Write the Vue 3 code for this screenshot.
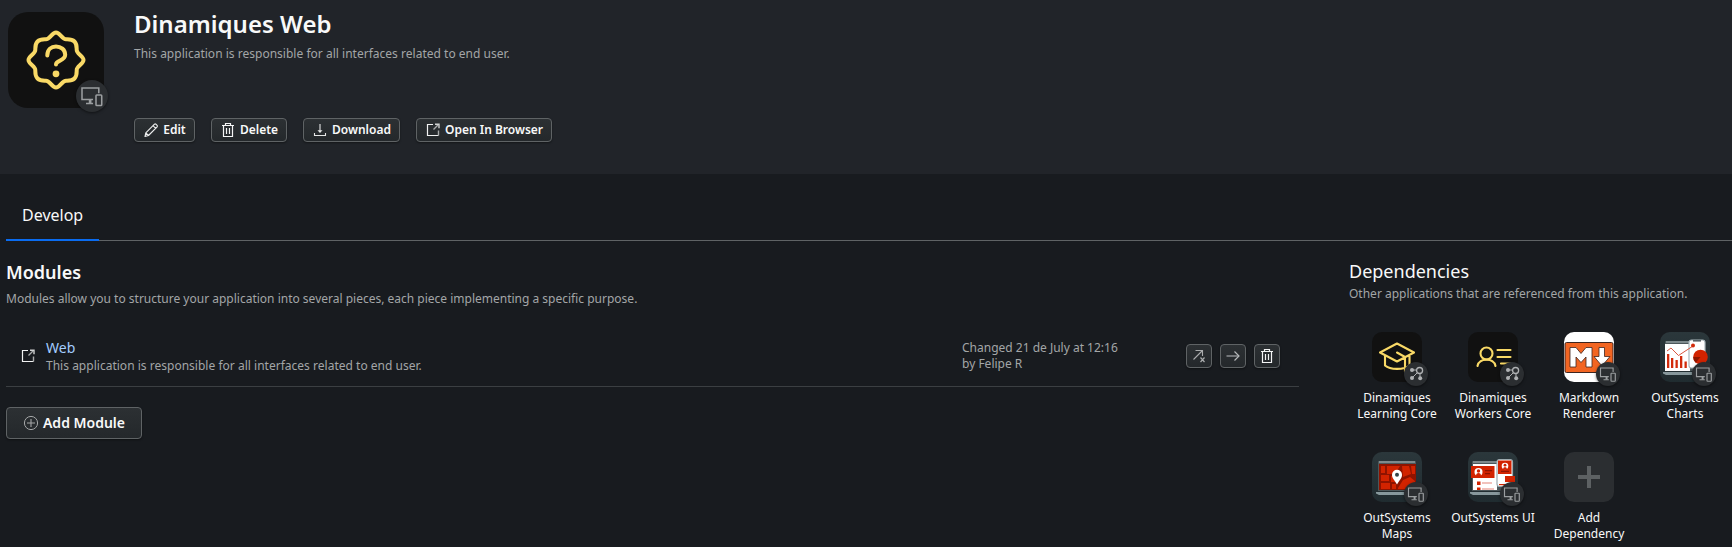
<script setup>
const actions = [
  { label: 'Edit', icon: 'edit', cls: 'w-edit' },
  { label: 'Delete', icon: 'trash', cls: 'w-delete' },
  { label: 'Download', icon: 'download', cls: 'w-download' },
  { label: 'Open In Browser', icon: 'open', cls: 'w-open' },
]
const rowActions = ['unlink', 'arrow', 'trash']
const dependencies = [
  { lines: ['Dinamiques', 'Learning Core'], icon: 'learning', tile: 'black', badge: 'service' },
  { lines: ['Dinamiques', 'Workers Core'], icon: 'workers', tile: 'black', badge: 'service' },
  { lines: ['Markdown', 'Renderer'], icon: 'markdown', tile: 'white', badge: 'devices' },
  { lines: ['OutSystems', 'Charts'], icon: 'charts', tile: 'slate', badge: 'devices' },
  { lines: ['OutSystems', 'Maps'], icon: 'maps', tile: 'slate', badge: 'devices' },
  { lines: ['OutSystems UI'], icon: 'ui', tile: 'slate', badge: 'devices' },
  { lines: ['Add', 'Dependency'], icon: 'plus', tile: 'add', badge: null },
]
</script>

<template>
  <div class="page">
    <svg class="sprite" aria-hidden="true">
      <symbol id="edit" viewBox="0 0 16 16">
        <path d="M2 14.500l.8-3.700L11.500 2.200q.7-.6 1.400 0l1.200 1.200q.6.700 0 1.400L5.500 13.500zM10 3.700l2.700 2.700M2.800 10.800l2.700 2.700" fill="none" stroke="#eceded" stroke-width="1.150" stroke-linejoin="round" />
      </symbol>
      <symbol id="trash" viewBox="0 0 16 16">
        <path d="M2 3.500h12M5.500 3.500v-2h5v2M3.500 3.500v11h9v-11M6.500 6v6M9.500 6v6" fill="none" stroke="#f4f5f5" stroke-width="1.200" />
      </symbol>
      <symbol id="download" viewBox="0 0 16 16">
        <path d="M8 2v8" fill="none" stroke="#a4a6a7" stroke-width="1.700" />
        <path d="M5.500 8.300h5L8 11z" fill="#e6e7e7" />
        <path d="M2.500 11v2.500h11V11" fill="none" stroke="#e6e7e7" stroke-width="1.100" />
      </symbol>
      <symbol id="open" viewBox="0 0 16 16">
        <path d="M8 2.500H2.500v11h11" fill="none" stroke="#f1f2f2" stroke-width="1.200" />
        <path d="M13.500 13.500V8.500M8.500 7.500l4.500-4.500" fill="none" stroke="#a9abac" stroke-width="1.400" />
        <path d="M10 2.200h4v4" fill="none" stroke="#d0d2d2" stroke-width="1.400" />
      </symbol>
      <symbol id="unlink" viewBox="0 0 16 16">
        <path d="M2.500 11.500l9-9M4.500 2.500h7V8" fill="none" stroke="#aaacad" stroke-width="1.100" />
        <path d="M9.500 9.500l4 4.500M13.500 9.500l-4 4.500" fill="none" stroke="#aaacad" stroke-width="1.200" />
      </symbol>
      <symbol id="arrow" viewBox="0 0 16 16">
        <path d="M1.500 8h12.500" fill="none" stroke="#85898b" stroke-width="1.600" />
        <path d="M9.500 3.500L14 8l-4.500 4.500" fill="none" stroke="#b7b9ba" stroke-width="1.200" />
      </symbol>
      <symbol id="devices" viewBox="0 0 24 24">
        <path d="M12.800 14.600H4.500V6h12.600v4M7.500 17.700h5.300" fill="none" stroke="#9b9ea0" stroke-width="1.150" />
        <path d="M10.600 14.600v3" fill="none" stroke="#9b9ea0" stroke-width="2" />
        <rect x="15" y="11.200" width="4.300" height="8" rx=".6" fill="none" stroke="#9b9ea0" stroke-width="1.150" />
      </symbol>
      <symbol id="service" viewBox="0 0 24 24">
        <g stroke="#b0b2b4" stroke-width="1" fill="none">
          <path d="M8 8h4.500M8 16l5-5M16 11.500V16" />
          <circle cx="15.600" cy="8.500" r="3" stroke-width="1.300" />
        </g>
        <g fill="#b0b2b4"><circle cx="8" cy="8" r="2" /><circle cx="8" cy="16" r="2" /><circle cx="16.200" cy="16.200" r="2" /></g>
      </symbol>
      <symbol id="laptop" viewBox="0 0 50 50">
        <path d="M6 9.500Q6 9 7 9h36q1 0 1 1v29H6z" fill="#4c575a" />
        <path d="M7 9h36v2H7z" fill="#7d898c" />
        <path d="M4 40h40v1.500l-2 1.500H7l-3-1.500z" fill="#87989c" />
      </symbol>
    </svg>

    <header class="header">
      <div class="app-icon">
        <svg class="app-glyph" viewBox="0 0 60 60">
          <g fill="none" stroke="#f9d966" stroke-width="4" stroke-linecap="round" stroke-linejoin="round">
            <path d="M30 2.500C34 2.500 36 9.300 40 9.300C43 9.300 46 9 48.500 11.500C51 14 50.700 17 50.700 20C50.700 24 57.500 26 57.500 30C57.500 34 50.700 36 50.700 40C50.700 43 51 46 48.500 48.500C46 51 43 50.700 40 50.700C36 50.700 34 57.500 30 57.500C26 57.500 24 50.700 20 50.700C17 50.700 14 51 11.500 48.500C9 46 9.300 43 9.300 40C9.300 36 2.500 34 2.500 30C2.500 26 9.300 24 9.300 20C9.300 17 9 14 11.500 11.500C14 9 17 9.300 20 9.300C24 9.300 26 2.500 30 2.500Z" />
            <path d="M21.300 25.500c0-6.200 4-9 8.700-9s9.200 3 9.200 8.300c0 6.500-9.200 5-9.200 9.700" />
          </g>
          <circle cx="30" cy="43.800" r="3.400" fill="#f9d966" />
        </svg>
        <span class="badge badge-lg"><svg viewBox="0 0 24 24"><use href="#devices" /></svg></span>
      </div>
      <div class="info">
        <h1>Dinamiques Web</h1>
        <p class="muted lead">This application is responsible for all interfaces related to end user.</p>
        <div class="actions">
          <button v-for="a in actions" :key="a.label" class="btn" :class="a.cls">
            <svg class="ico"><use :href="'#' + a.icon" /></svg><span>{{ a.label }}</span>
          </button>
        </div>
      </div>
    </header>

    <nav class="tabs"><div class="tab">Develop</div></nav>

    <div class="columns">
      <section class="modules">
        <h2>Modules</h2>
        <p class="muted">Modules allow you to structure your application into several pieces, each piece implementing a specific purpose.</p>
        <div class="row">
          <svg class="ico"><use href="#open" /></svg>
          <div class="mod">
            <a>Web</a>
            <p class="muted wide">This application is responsible for all interfaces related to end user.</p>
          </div>
          <div class="changed muted">Changed 21 de July at 12:16<br />by Felipe R</div>
          <div class="row-actions">
            <button v-for="i in rowActions" :key="i" class="btn square"><svg class="ico"><use :href="'#' + i" /></svg></button>
          </div>
        </div>
        <button class="btn add-module">
          <svg class="ico" viewBox="0 0 16 16"><g fill="none" stroke="#a5a7a8"><circle cx="8" cy="8" r="6.600" stroke-width="1" /><path d="M8 4v8M4 8h8" stroke-width="1.100" /></g></svg><span>Add Module</span>
        </button>
      </section>

      <aside class="deps">
        <h3>Dependencies</h3>
        <p class="muted">Other applications that are referenced from this application.</p>
        <div class="grid">
          <div v-for="d in dependencies" :key="d.icon" class="dep">
            <div class="tile" :class="d.tile">
              <svg class="art" viewBox="0 0 50 50">
                <g v-if="d.icon === 'learning'" fill="none" stroke="#f9d966" stroke-width="2.100" stroke-linejoin="round" stroke-linecap="round">
                  <path d="M8 20.500L25 11.500l17 9L25 29.500zM13 24v9.500c5 4.500 19 4.500 24.500 0V24M25 20.500l8 4.500v15" />
                </g>
                <g v-else-if="d.icon === 'workers'" fill="none" stroke="#f9d966" stroke-width="2.100" stroke-linecap="round">
                  <circle cx="18.500" cy="21.500" r="6" />
                  <path d="M9.500 34c1.500-8.500 16.500-8.500 18 0M29.500 18h13M29.500 25h13M33 31.500h9.500" />
                </g>
                <g v-else-if="d.icon === 'markdown'">
                  <rect x="1" y="10.500" width="48" height="30" rx="1.500" fill="#f26522" stroke="#3d2520" stroke-width="1" />
                  <path d="M6 35V15.500h6l5 6 5-6h6V35h-6V25l-5 5.500-5-5.500v10z" fill="#fff" stroke="#3d2520" stroke-width=".8" />
                  <path d="M35 15.500h5.500v9H46L38 34l-8-9.500h5z" fill="#fff" stroke="#3d2520" stroke-width=".8" />
                </g>
                <g v-else-if="d.icon === 'charts'">
                  <use href="#laptop" x="-1" width="50" height="50" />
                  <path d="M5 12h25v27H5z" fill="#fff" />
                  <g fill="#d22b0b"><path d="M7 22h2.300v14H7zM11 26h2.300v10H11zM15.500 28h2.300v8h-2.300zM20 24h2.300v12H20zM24.500 29.500h2.300V36h-2.300z" /></g>
                  <rect x="29" y="8" width="16" height="28" rx="2.500" fill="#fff" stroke="#aab7bc" stroke-width="1.200" />
                  <path d="M33 8h8v1.600h-8z" fill="#566166" />
                  <path d="M7 19l4-3 7.500 7.500L33 14" fill="none" stroke="#d5432a" stroke-width=".9" />
                  <circle cx="33" cy="13.500" r="2" fill="#d22b0b" />
                  <circle cx="40.500" cy="25" r="7.300" fill="#d22300" />
                  <path d="M40.500 25h-7.300q0 4 2.500 5.800z" fill="#8d1600" />
                </g>
                <g v-else-if="d.icon === 'maps'">
                  <use href="#laptop" width="50" height="50" />
                  <path d="M7 12h37v26H7z" fill="#8e1300" />
                  <path d="M9 14h4v7H9zM15 14h13l-5 8h-8zM30 14h7l2 8-8 3zM39 14h4v8h-3zM9 23h8v6H9zM19 24h4v6h-4zM9 31h9v6H9zM20 32h4v5h-4zM26 36l5-8 7-3 5 4v8H26z" fill="#d22300" />
                  <path d="M25 32.500c-3-5-5-6.500-5-9.700a5 5 0 0 1 10 0c0 3.200-2 4.700-5 9.700z" fill="#fff" /><circle cx="25" cy="22.800" r="2" fill="#34454a" />
                </g>
                <g v-else-if="d.icon === 'ui'">
                  <use href="#laptop" x="-2" width="50" height="50" />
                  <path d="M5 12h24v26H5z" fill="#fff" />
                  <path d="M3 14h23.500v12H3z" fill="#d22300" />
                  <path d="M17 18h7v1.200h-7zM17 21h5v1.200h-5z" fill="#8e1300" />
                  <path d="M9 29.500h3.500V33H9zM9 35.500h3.500V38H9z" fill="#d22300" />
                  <path d="M14 30.500h10v1H14zM14 36.500h12v1H14z" fill="#e4857a" />
                  <circle cx="10.500" cy="20" r="4" fill="#fff" /><circle cx="10.500" cy="19" r="1.700" fill="#d22300" /><path d="M8 24q0-3 2.500-3T13 24z" fill="#d22300" />
                  <rect x="29" y="7.500" width="15.500" height="27" rx="2.500" fill="#fff" stroke="#9caaaf" stroke-width="1.200" />
                  <path d="M30 8.500h13.500V22H30z" fill="#d22300" />
                  <circle cx="37" cy="14" r="3.300" fill="#fff" /><circle cx="37" cy="13.200" r="1.400" fill="#d22300" /><path d="M35 17.500q0-2.500 2-2.500t2 2.500z" fill="#d22300" />
                  <path d="M33 18.800h8v1.200h-8z" fill="#8e1300" />
                  <path d="M37 24h10v6H37z" fill="#d22300" /><path d="M31 32h7v1.200h-7z" fill="#d22300" />
                </g>
                <path v-else d="M14 25h22M25 14v22" stroke="#5d6163" stroke-width="4" />
              </svg>
              <span v-if="d.badge" class="badge"><svg viewBox="0 0 24 24"><use :href="'#' + d.badge" /></svg></span>
            </div>
            <div class="label"><span v-for="l in d.lines" :key="l">{{ l }}</span></div>
          </div>
        </div>
      </aside>
    </div>
  </div>
</template>

<style>
body { background: #181b1f; }
</style>
<style scoped>
* { box-sizing: border-box; margin: 0; padding: 0; }
.page { width: 1732px; height: 547px; overflow: hidden; background: #181b1f; color: #f8f9f9; font-family: "Noto Sans", sans-serif; font-size: 12px; line-height: 16px; }
.sprite { position: absolute; width: 0; height: 0; }
.muted { color: #a3a6a7; }
.header { display: flex; height: 174px; padding: 12px 0 0 8px; background: #212429; }
.app-icon { position: relative; display: flex; align-items: center; justify-content: center; width: 96px; height: 96px; border-radius: 20px; background: #111; }
.app-glyph { width: 60px; height: 60px; }
.badge { position: absolute; right: -6px; bottom: -4px; width: 24px; height: 24px; border-radius: 50%; background: #2b2e31; box-shadow: 0 1px 3px rgba(0, 0, 0, .5); }
.badge svg { display: block; width: 100%; height: 100%; }
.badge-lg { right: -4px; bottom: -4px; width: 32px; height: 32px; }
.info { margin-left: 30px; }
h1 { height: 24px; font-size: 24px; font-weight: 600; line-height: 24px; }
.lead { margin-top: 10px; letter-spacing: .015px; }
.wide { letter-spacing: .015px; }
.actions { display: flex; gap: 16px; margin-top: 56px; }
.btn { display: flex; align-items: center; justify-content: center; gap: 4px; height: 24px; border: 1px solid #5f6365; border-radius: 4px; background: linear-gradient(#2c3033, #24282b); box-shadow: 0 1px 2px rgba(0, 0, 0, .4); color: #f8f9f9; font: 600 12px/16px "Noto Sans", sans-serif; white-space: nowrap; }
.ico { display: block; flex: none; width: 16px; height: 16px; }
.w-edit { width: 61px; }
.w-delete { width: 76px; }
.w-download { width: 97px; }
.w-open { width: 136px; }
.tabs { display: flex; height: 67px; margin-left: 6px; border-bottom: 1px solid #5f6365; }
.tab { width: 93px; height: 67px; padding: 29px 0 0 16px; border-bottom: 2px solid #0a6cf0; font-size: 16px; line-height: 24px; }
.columns { display: flex; justify-content: space-between; padding-left: 6px; }
.modules { width: 1293px; }
h2 { margin-top: 19px; font-size: 18px; font-weight: 600; line-height: 24px; }
.modules > .muted { margin-top: 7px; }
.row { display: flex; align-items: center; height: 62px; margin-top: 18px; padding: 0 19px 0 14px; border-bottom: 1px solid #3b3f42; }
.mod { width: 916px; height: 35px; margin-left: 10px; }
.mod a { display: block; height: 20px; color: #a3cdff; font-size: 14px; line-height: 19px; }
.changed { width: 224px; }
.row-actions { display: flex; gap: 8px; }
.square { width: 26px; }
.add-module { width: 136px; height: 32px; margin-top: 20px; font-size: 14px; }
.deps { width: 383px; }
h3 { margin-top: 18px; font-size: 18px; font-weight: 400; line-height: 24px; }
.deps > .muted { margin-top: 3px; }
.grid { display: grid; grid-template-columns: repeat(4, 96px); grid-auto-rows: 120px; margin: 30px 0 0 0; }
.dep { display: flex; flex-direction: column; align-items: center; }
.tile { position: relative; width: 50px; height: 50px; border-radius: 10px; }
.art { display: block; width: 50px; height: 50px; }
.black { background: #111; }
.white { background: #fff; }
.slate { background: linear-gradient(#2b373b, #202c30); }
.add { background: #2b2e31; }
.label { display: flex; flex-direction: column; margin-top: 8px; text-align: center; white-space: nowrap; }
</style>
